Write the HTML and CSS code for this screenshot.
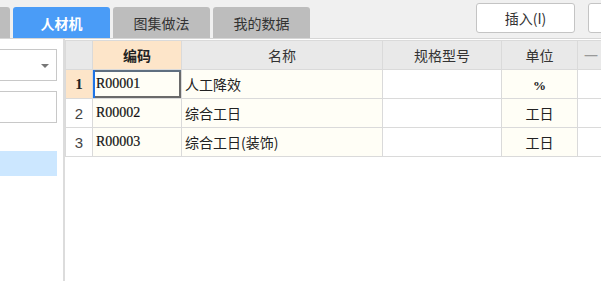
FILE: index.html
```html
<!DOCTYPE html>
<html lang="zh">
<head>
<meta charset="utf-8">
<link rel="stylesheet" href="styles.css">
</head>
<body>
<div class="topbar">
  <div class="tabs">
    <div class="tab tab-stub"></div>
    <div class="tab tab-active">人材机</div>
    <div class="tab">图集做法</div>
    <div class="tab">我的数据</div>
  </div>
  <div class="actions">
    <button class="btn">插入(I)</button>
    <button class="btn btn-cut"></button>
  </div>
</div>
<div class="main">
  <aside class="side">
    <div class="select"><span class="caret"></span></div>
    <div class="input"></div>
    <div class="item-selected"></div>
  </aside>
  <section class="grid-wrap">
    <table class="grid">
      <colgroup>
        <col class="c-num"><col class="c-code"><col class="c-name"><col class="c-spec"><col class="c-unit"><col class="c-more">
      </colgroup>
      <thead>
        <tr>
          <th class="corner"></th>
          <th class="hl">编码</th>
          <th>名称</th>
          <th>规格型号</th>
          <th>单位</th>
          <th class="more">一</th>
        </tr>
      </thead>
      <tbody>
        <tr>
          <td class="num hl bold">1</td>
          <td class="code current">R00001</td>
          <td class="name">人工降效</td>
          <td class="spec"></td>
          <td class="unit"><span class="pct">%</span></td>
          <td class="more"></td>
        </tr>
        <tr>
          <td class="num">2</td>
          <td class="code">R00002</td>
          <td class="name">综合工日</td>
          <td class="spec"></td>
          <td class="unit">工日</td>
          <td class="more"></td>
        </tr>
        <tr>
          <td class="num">3</td>
          <td class="code">R00003</td>
          <td class="name">综合工日(装饰)</td>
          <td class="spec"></td>
          <td class="unit">工日</td>
          <td class="more"></td>
        </tr>
      </tbody>
    </table>
  </section>
</div>
</body>
</html>
```
FILE: styles.css
```css
* { box-sizing: border-box; }
html, body { margin: 0; padding: 0; }
body {
  width: 601px;
  height: 281px;
  overflow: hidden;
  background: #f0f0f0;
  font-family: "Noto Sans CJK SC", "Noto Sans", sans-serif;
  font-size: 14px;
  color: #222;
}
.topbar {
  display: flex;
  justify-content: space-between;
  height: 39px;
  border-bottom: 1px solid #d6d6d6;
}
.tabs {
  display: flex;
  align-items: flex-end;
  gap: 3px;
  padding-top: 7px;
}
.tab {
  width: 97px;
  height: 31px;
  background: #bdbdbd;
  border-radius: 3px 3px 0 0;
  display: flex;
  align-items: center;
  justify-content: center;
  color: #333;
  font-size: 14px;
}
.tab-stub { width: 10px; border-radius: 0 3px 0 0; }
.tab-active { background: #4a9cf7; color: #fff; font-weight: bold; }
.actions {
  display: flex;
  gap: 13px;
  padding-top: 3px;
  margin-right: -30px;
}
.btn {
  width: 99px;
  height: 30px;
  background: #fff;
  border: 1px solid #c4c4c4;
  border-radius: 3px;
  font-family: "Noto Sans CJK SC", sans-serif;
  font-size: 14px;
  color: #333;
  padding: 0;
}
.btn-cut { width: 43px; }
.main {
  display: flex;
  height: 242px;
  background: #fff;
}
.side {
  width: 65px;
  border-right: 2px solid #dcdcdc;
  padding-top: 10px;
  display: flex;
  flex-direction: column;
}
.select, .input {
  width: 58px;
  height: 32px;
  margin-left: -1px;
  border: 1px solid #c8c8c8;
  background: #fff;
  position: relative;
}
.input { margin-top: 10px; }
.caret {
  position: absolute;
  right: 7px;
  top: 14px;
  border-left: 4px solid transparent;
  border-right: 4px solid transparent;
  border-top: 4px solid #777;
}
.item-selected {
  margin-top: 28px;
  width: 57px;
  height: 25px;
  background: #cce7ff;
}
.grid-wrap {
  flex: 1;
  padding-top: 1px;
  overflow: hidden;
}
.grid {
  border-collapse: collapse;
  table-layout: fixed;
  width: 600px;
}
.c-num { width: 27px; }
.c-code { width: 89px; }
.c-name { width: 201px; }
.c-spec { width: 119px; }
.c-unit { width: 76px; }
.c-more { width: 88px; }
.grid th, .grid td {
  border: 1px solid #dadada;
  padding: 0;
  white-space: nowrap;
  overflow: hidden;
}
.grid th {
  height: 29px;
  background: #e9e9e9;
  font-weight: normal;
  font-size: 14px;
  color: #333;
  text-align: center;
}
.grid th.hl { background: #fde5c9; font-weight: bold; color: #222; }
.grid th.more { color: #999; text-align: left; padding-left: 6px; }
.grid td {
  height: 29px;
  background: #fffef6;
  font-size: 14px;
}
.grid td.num {
  background: #fff;
  text-align: center;
  font-family: "Liberation Sans", sans-serif;
  color: #444;
  font-size: 15px;
}
.grid td.num.hl { background: #fde5c9; }
.grid td.bold { font-weight: bold; font-family: "Liberation Serif", serif; color: #222; }
.grid td.code {
  font-family: "Liberation Serif", serif;
  font-size: 14px;
  padding-left: 3px;
  color: #111;
  -webkit-text-stroke: 0.2px #111;
}
.grid td.current {
  box-shadow: inset 2px 0 0 #1f74e6, inset 0 2px 0 #5f6f80, inset -2px 0 0 #6a6a6a, inset 0 -2px 0 #6a6a6a;
}
.grid td.name { padding-left: 3px; color: #222; }
.grid td.spec { background: #fff; }
.grid td.unit { text-align: center; }
.grid td.more { background: #fff; }
.pct { font-family: "Liberation Serif", serif; font-weight: bold; font-size: 13px; }
```
